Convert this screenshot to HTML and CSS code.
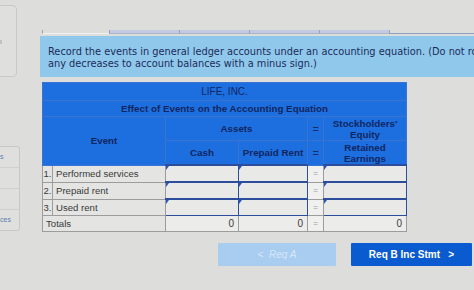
FILE: index.html
```html
<!DOCTYPE html>
<html lang="en">
<head>
    <meta charset="UTF-8">
    <title>Accounting Equation</title>
    <link rel="stylesheet" href="styles.css">
</head>
<body>
    <div class="page">
        <div class="side">
            <div class="side-box top-box"><span class="mark">ı</span></div>
            <div class="side-box list-box">
                <div class="side-row">s</div>
                <div class="side-row"></div>
                <div class="side-row"></div>
                <div class="side-row last">ces</div>
            </div>
        </div>
        <div class="main">
            <div class="tabs">
                <span class="tab first"></span>
                <span class="tab on"></span>
                <span class="tab on"></span>
                <span class="tab on"></span>
                <span class="tab on"></span>
                <span class="tab rest"></span>
            </div>
            <div class="note">
                <div>Record the events in general ledger accounts under an accounting equation. (Do not ro</div>
                <div>any decreases to account balances with a minus sign.)</div>
            </div>
            <table class="sheet">
                <colgroup>
                    <col class="c-num">
                    <col class="c-label">
                    <col class="c-cash">
                    <col class="c-rent">
                    <col class="c-eq">
                    <col class="c-re">
                </colgroup>
                <tr class="h1"><th colspan="6">LIFE, INC.</th></tr>
                <tr class="h2"><th colspan="6">Effect of Events on the Accounting Equation</th></tr>
                <tr class="h3">
                    <th colspan="2" rowspan="2">Event</th>
                    <th colspan="2">Assets</th>
                    <th>=</th>
                    <th>Stockholders'<br>Equity</th>
                </tr>
                <tr class="h3">
                    <th>Cash</th>
                    <th>Prepaid Rent</th>
                    <th>=</th>
                    <th>Retained<br>Earnings</th>
                </tr>
                <tr>
                    <td class="num">1.</td>
                    <td class="label">Performed services</td>
                    <td class="input"></td>
                    <td class="input"></td>
                    <td class="eq">=</td>
                    <td class="input"></td>
                </tr>
                <tr>
                    <td class="num">2.</td>
                    <td class="label">Prepaid rent</td>
                    <td class="input"></td>
                    <td class="input"></td>
                    <td class="eq">=</td>
                    <td class="input"></td>
                </tr>
                <tr>
                    <td class="num">3.</td>
                    <td class="label">Used rent</td>
                    <td class="input"></td>
                    <td class="input"></td>
                    <td class="eq">=</td>
                    <td class="input"></td>
                </tr>
                <tr class="totals">
                    <td colspan="2" class="label">Totals</td>
                    <td class="val">0</td>
                    <td class="val">0</td>
                    <td class="eq">=</td>
                    <td class="val">0</td>
                </tr>
            </table>
            <div class="actions">
                <button class="btn off">&lt;&nbsp;&nbsp;Req A</button>
                <button class="btn go">Req B Inc Stmt&nbsp;&nbsp;&nbsp;&gt;</button>
            </div>
        </div>
    </div>
</body>
</html>
```

FILE: styles.css
```css
body {
    margin: 0;
    background-color: #dddddb;
    font-family: "Liberation Sans", Arial, sans-serif;
    overflow: hidden;
}
.page {
    display: flex;
    width: 474px;
    height: 290px;
}
.side {
    width: 40px;
    flex: none;
    display: flex;
    flex-direction: column;
}
.side-box {
    border: 1px solid #c8c8c6;
    border-left: none;
    border-radius: 0 5px 5px 0;
    background-color: #dfdfdd;
}
.top-box {
    width: 16px;
    height: 70px;
    margin-top: 5px;
    display: flex;
    align-items: center;
}
.mark {
    font-size: 7px;
    color: #8a8a8a;
}
.list-box {
    width: 19px;
    margin-top: 69px;
    border-radius: 0 3px 3px 0;
}
.side-row {
    height: 20px;
    border-bottom: 1px solid #cfcfcd;
    font-size: 7px;
    line-height: 20px;
    color: #5a7eb0;
    overflow: hidden;
}
.side-row.last {
    border-bottom: none;
}
.main {
    flex: 1;
    overflow: hidden;
    padding-top: 30px;
}
.tabs {
    display: flex;
    height: 6px;
    margin-left: 2px;
}
.tab {
    height: 3px;
    border-bottom: 1px solid #a8b4c8;
    border-left: 1px solid #9aa2b0;
}
.tab.first {
    width: 66px;
    border-bottom-color: #f2f2f2;
}
.tab.on {
    width: 69px;
    background-color: #c4cbe0;
}
.tab.rest {
    flex: 1;
    border-bottom-color: #8aa0c0;
}
.note {
    background-color: #90c8ec;
    color: #1b2c58;
    font-family: "DejaVu Sans", Verdana, sans-serif;
    font-size: 9.8px;
    line-height: 11.5px;
    padding: 10px 0 8px 8px;
    white-space: nowrap;
    height: 23px;
}
.sheet {
    margin: 5px 0 0 2px;
    border-collapse: collapse;
    table-layout: fixed;
    width: 364px;
    font-size: 9px;
}
.c-num { width: 10px; }
.c-label { width: 113px; }
.c-cash { width: 73px; }
.c-rent { width: 69px; }
.c-eq { width: 16px; }
.c-re { width: 83px; }
.sheet th {
    background-color: #1d6fe0;
    color: #11265f;
    font-weight: bold;
    border: 1px solid #3a74d2;
    padding: 0;
    text-align: center;
}
.h1 th {
    height: 17px;
    font-weight: normal;
    font-size: 10px;
}
.h2 th {
    height: 15px;
    font-size: 9.8px;
}
.h3 th {
    height: 23px;
    line-height: 11px;
    font-size: 9.8px;
}
.sheet td {
    height: 15px;
    padding: 0;
    border: 1px solid #9c9c9c;
    background-color: #e4e4e2;
    color: #3a3a3a;
}
.sheet td.num {
    text-align: center;
    font-size: 9.5px;
}
.sheet td.label {
    padding-left: 3px;
    font-size: 9.6px;
}
.sheet td.input {
    background-color: #e9e9e7;
    border: 1px solid #2c4c9c;
    border-top-width: 2px;
    position: relative;
}
.sheet td.input::before {
    content: "";
    position: absolute;
    left: 0;
    top: 0;
    border-top: 4px solid #2a55b8;
    border-right: 3px solid transparent;
}
.sheet td.eq {
    background-color: #f0f0ee;
    color: #9a9a9a;
    text-align: center;
    font-size: 8px;
}
.sheet td.val {
    text-align: right;
    padding-right: 4px;
    background-color: #ececea;
    font-size: 10px;
}
.actions {
    display: flex;
    justify-content: flex-end;
    gap: 15px;
    margin-top: 11px;
    padding-right: 2px;
}
.btn {
    height: 23px;
    border: none;
    border-radius: 1px;
    font-family: "Liberation Sans", Arial, sans-serif;
    font-size: 10px;
    font-weight: bold;
    padding: 0;
}
.btn.off {
    width: 118px;
    background-color: #a9cdf0;
    color: #d4e6f8;
    font-weight: normal;
    font-style: italic;
}
.btn.go {
    width: 121px;
    background-color: #0a5bd0;
    color: #ffffff;
}
```
